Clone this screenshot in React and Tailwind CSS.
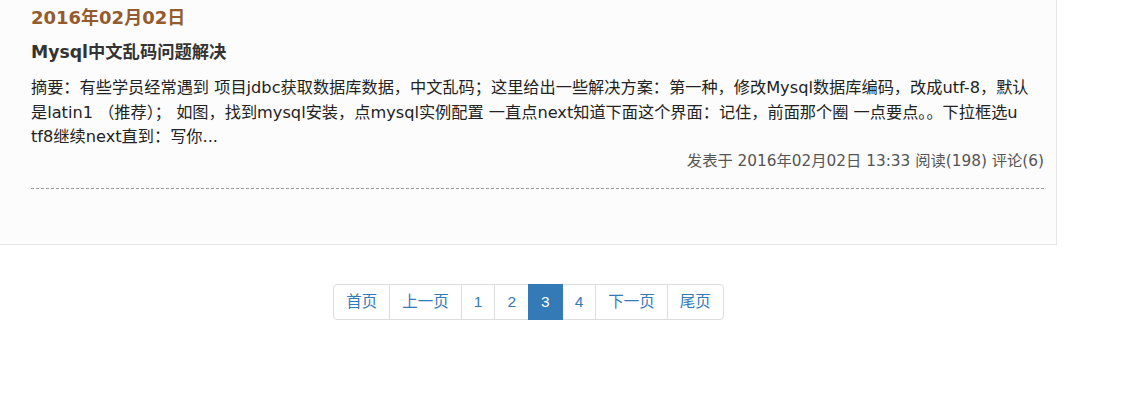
import React from "react";

const pages = ["首页", "上一页", "1", "2", "3", "4", "下一页", "尾页"];

const App = () => {
    return (
        <div className="w-[1134px] min-h-[414px] bg-white">
            <div className="w-[1057px] bg-[#fcfcfc] border-r border-b border-[#e6e6e6] pl-[31px] pr-[12px] pt-[6px] pb-[55px] font-['DejaVu_Sans','Noto_Sans_CJK_SC',sans-serif]">
                <div className="text-[18px] leading-[24px] font-bold text-[#935b2e]">2016年02月02日</div>
                <h2 className="mt-[10px] text-[17.3px] leading-[24px] font-bold text-[#333]">Mysql中文乱码问题解决</h2>
                <p className="mt-[12px] text-[16.2px] leading-[24.5px] text-[#222] whitespace-nowrap">
                    摘要：有些学员经常遇到 项目jdbc获取数据库数据，中文乱码；这里给出一些解决方案：第一种，修改Mysql数据库编码，改成utf-8，默认<br />
                    是latin1 （推荐）； 如图，找到mysql安装，点mysql实例配置 一直点next知道下面这个界面：记住，前面那个圈 一点要点。。下拉框选u<br />
                    tf8继续next直到：写你...
                </p>
                <div className="text-right text-[15.3px] leading-[22px] text-[#555]">发表于 2016年02月02日 13:33 阅读(198) 评论(6)</div>
                <div className="mt-[16px] border-b border-dashed border-[#999]"></div>
            </div>
            <div className="w-[1057px] flex justify-center mt-[39px]">
                <ul className="flex font-['Liberation_Sans','Noto_Sans_CJK_SC',sans-serif] text-[15.5px] leading-[22px]">
                    {pages.map((p, i) => (
                        <li key={p}>
                            <span
                                className={
                                    "block px-[12px] py-[6px] border " +
                                    (i > 0 ? "-ml-px " : "") +
                                    (i === 0 ? "rounded-l " : "") +
                                    (i === pages.length - 1 ? "rounded-r " : "") +
                                    (p === "3"
                                        ? "bg-[#337ab7] border-[#337ab7] text-white relative"
                                        : "bg-white border-[#ddd] text-[#337ab7]")
                                }
                            >
                                {p}
                            </span>
                        </li>
                    ))}
                </ul>
            </div>
        </div>
    );
};

export default App;
